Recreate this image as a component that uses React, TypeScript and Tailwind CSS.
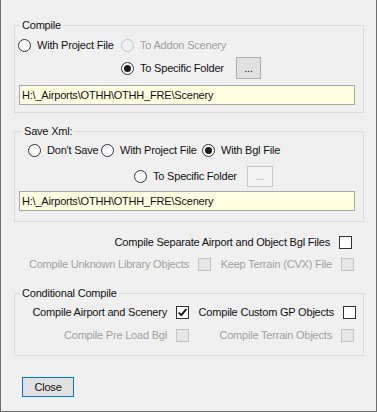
import React from "react"

function Radio({ checked, disabled }: { checked?: boolean; disabled?: boolean }) {
  return (
    <span
      className={
        disabled
          ? "flex h-[13px] w-[13px] shrink-0 items-center justify-center rounded-full border border-[#c4c4c4] bg-[#f0f0f0]"
          : "flex h-[13px] w-[13px] shrink-0 items-center justify-center rounded-full border border-[#333333] bg-white"
      }
    >
      {checked && <span className="h-[7px] w-[7px] rounded-full bg-[#1b1b1b]" />}
    </span>
  )
}

function Check({ checked, disabled }: { checked?: boolean; disabled?: boolean }) {
  return (
    <span
      className={
        disabled
          ? "flex h-[13px] w-[13px] shrink-0 items-center justify-center border border-[#c4c4c4] bg-[#e6e6e6]"
          : "flex h-[13px] w-[13px] shrink-0 items-center justify-center border border-[#333333] bg-white"
      }
    >
      {checked && (
        <svg width="11" height="11" viewBox="0 0 11 11">
          <path d="M1.8 5.6 L4.3 8.2 L9.3 2.2" fill="none" stroke="#111" strokeWidth="1.9" />
        </svg>
      )}
    </span>
  )
}

function PathBox() {
  return (
    <div className="ml-[4px] flex h-[20px] w-[336px] items-center border border-[#a9a9a9] bg-[#ffffe1] pl-[2px]">
      H:\_Airports\OTHH\OTHH_FRE\Scenery
    </div>
  )
}

export default function App() {
  return (
    <div className="flex h-[412px] w-[377px] flex-col border-r border-b border-l border-[#6b6b6b] bg-[#f0f0f0] font-['Liberation_Sans',Arial,sans-serif] text-[11px] leading-[13px] tracking-[-0.2px] text-[#111]">
      {/* Compile */}
      <fieldset className="mt-[17px] ml-[13px] w-[350px] border border-[#dcdcdc] pb-[7px]">
        <legend className="ml-[5px] px-[2px] leading-[16px]">Compile</legend>
        <div className="mt-[2px] flex h-[20px] items-center pl-[3px]">
          <label className="flex w-[103px] items-center gap-[6px]">
            <Radio />
            With Project File
          </label>
          <label className="flex items-center gap-[6px] text-[#a0a0a0]">
            <Radio disabled />
            To Addon Scenery
          </label>
        </div>
        <div className="mt-[2px] flex h-[22px] items-center pl-[106px]">
          <label className="flex w-[115px] items-center gap-[6px]">
            <Radio checked />
            To Specific Folder
          </label>
          <button className="flex h-[22px] w-[25px] items-center justify-center border border-[#adadad] bg-[#e1e1e1]">
            ...
          </button>
        </div>
        <div className="mt-[6px]">
          <PathBox />
        </div>
      </fieldset>

      {/* Save Xml */}
      <fieldset className="mt-[10px] ml-[13px] w-[350px] border border-[#dcdcdc] pb-[10px]">
        <legend className="ml-[7px] px-[2px] leading-[16px]">Save Xml:</legend>
        <div className="mt-[1px] flex h-[20px] items-center pl-[13px]">
          <label className="flex w-[73px] items-center gap-[6px]">
            <Radio />
            Don't Save
          </label>
          <label className="flex w-[101px] items-center gap-[6px]">
            <Radio />
            With Project File
          </label>
          <label className="flex items-center gap-[6px]">
            <Radio checked />
            With Bgl File
          </label>
        </div>
        <div className="mt-[5px] flex h-[22px] items-center pl-[119px]">
          <label className="flex w-[113px] items-center gap-[6px]">
            <Radio />
            To Specific Folder
          </label>
          <button className="flex h-[21px] w-[26px] items-center justify-center border border-[#c8c8c8] bg-[#f4f4f4] text-[#a8a8a8]">
            ...
          </button>
        </div>
        <div className="mt-[4px]">
          <PathBox />
        </div>
      </fieldset>

      {/* Loose options */}
      <div className="mt-[10px] flex h-[20px] items-center justify-end gap-[9px] pr-[24px]">
        Compile Separate Airport and Object Bgl Files
        <Check />
      </div>
      <div className="mt-[2px] flex h-[20px] items-center text-[#a0a0a0]">
        <div className="flex w-[210px] items-center justify-end gap-[9px]">
          Compile Unknown Library Objects
          <Check disabled />
        </div>
        <div className="flex w-[143px] items-center justify-end gap-[9px]">
          Keep Terrain (CVX) File
          <Check disabled />
        </div>
      </div>

      {/* Conditional Compile */}
      <fieldset className="mt-[11px] ml-[13px] w-[350px] border border-[#dcdcdc] pb-[10px]">
        <legend className="ml-[5px] px-[2px] leading-[16px]">Conditional Compile</legend>
        <div className="mt-[1px] flex h-[20px] items-center">
          <div className="flex w-[174px] items-center justify-end gap-[9px]">
            Compile Airport and Scenery
            <Check checked />
          </div>
          <div className="flex w-[167px] items-center justify-end gap-[9px]">
            Compile Custom GP Objects
            <Check />
          </div>
        </div>
        <div className="mt-[3px] flex h-[20px] items-center text-[#a0a0a0]">
          <div className="flex w-[174px] items-center justify-end gap-[9px]">
            Compile Pre Load Bgl
            <Check disabled />
          </div>
          <div className="flex w-[165px] items-center justify-end gap-[9px]">
            Compile Terrain Objects
            <Check disabled />
          </div>
        </div>
      </fieldset>

      <button className="mt-[21px] ml-[21px] flex h-[20px] w-[52px] items-center justify-center border border-[#0078d7] bg-[#e1e1e1]">
        Close
      </button>
    </div>
  )
}
